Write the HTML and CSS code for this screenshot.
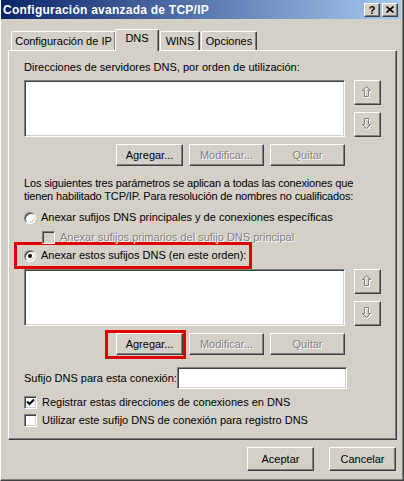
FILE: index.html
```html
<!DOCTYPE html>
<html lang="es">
<head>
  <meta charset="UTF-8">
  <title>Configuración avanzada de TCP/IP</title>
  <link rel="stylesheet" href="styles.css">
</head>
<body>
  <div class="window">
    <div class="titlebar">
      <span class="title">Configuración avanzada de TCP/IP</span>
      <div class="caption-btns">
        <span class="cap-btn">?</span>
        <span class="cap-btn">
          <svg width="8" height="7" viewBox="0 0 8 7"><path d="M0.5 0.5 L7.5 6.5 M7.5 0.5 L0.5 6.5" stroke="#000" stroke-width="1.6" fill="none"/></svg>
        </span>
      </div>
    </div>

    <div class="client">
      <div class="tabs">
        <span class="tab tab-ip">Configuración de IP</span>
        <span class="tab tab-dns active">DNS</span>
        <span class="tab tab-wins">WINS</span>
        <span class="tab tab-opc">Opciones</span>
      </div>

      <div class="panel">
        <div class="label first">Direcciones de servidores DNS, por orden de utilización:</div>
        <div class="list-row">
          <div class="listbox"></div>
          <div class="arrows">
            <span class="btn arrow-btn">
              <svg width="11" height="13" viewBox="0 0 11 13">
                <path d="M5.5 1.5 L9.5 5.5 L7.5 5.5 L7.5 11.5 L3.5 11.5 L3.5 5.5 L1.5 5.5 Z" stroke="#fff" fill="none"/>
                <path d="M4.5 0.5 L8.5 4.5 L6.5 4.5 L6.5 10.5 L2.5 10.5 L2.5 4.5 L0.5 4.5 Z" stroke="#808080" fill="none"/>
              </svg>
            </span>
            <span class="btn arrow-btn">
              <svg width="11" height="13" viewBox="0 0 11 13">
                <path d="M5.5 11.5 L9.5 7.5 L7.5 7.5 L7.5 1.5 L3.5 1.5 L3.5 7.5 L1.5 7.5 Z" stroke="#fff" fill="none"/>
                <path d="M4.5 10.5 L8.5 6.5 L6.5 6.5 L6.5 0.5 L2.5 0.5 L2.5 6.5 L0.5 6.5 Z" stroke="#808080" fill="none"/>
              </svg>
            </span>
          </div>
        </div>
        <div class="btn-row">
          <span class="btn push">Agregar...</span>
          <span class="btn push disabled">Modificar...</span>
          <span class="btn push disabled">Quitar</span>
        </div>

        <p class="note">Los siguientes tres parámetros se aplican a todas las conexiones que<br>tienen habilitado TCP/IP. Para resolución de nombres no cualificados:</p>

        <div class="option radio-1">
          <span class="radio"></span>
          <span>Anexar sufijos DNS principales y de conexiones específicas</span>
        </div>
        <div class="option sub-option disabled">
          <span class="check off"></span>
          <span>Anexar sufijos primarios del sufijo DNS principal</span>
        </div>
        <div class="option radio-2 marked">
          <span class="radio on"></span>
          <span>Anexar estos sufijos DNS (en este orden):</span>
        </div>

        <div class="list-row list-2">
          <div class="listbox"></div>
          <div class="arrows">
            <span class="btn arrow-btn">
              <svg width="11" height="13" viewBox="0 0 11 13">
                <path d="M5.5 1.5 L9.5 5.5 L7.5 5.5 L7.5 11.5 L3.5 11.5 L3.5 5.5 L1.5 5.5 Z" stroke="#fff" fill="none"/>
                <path d="M4.5 0.5 L8.5 4.5 L6.5 4.5 L6.5 10.5 L2.5 10.5 L2.5 4.5 L0.5 4.5 Z" stroke="#808080" fill="none"/>
              </svg>
            </span>
            <span class="btn arrow-btn">
              <svg width="11" height="13" viewBox="0 0 11 13">
                <path d="M5.5 11.5 L9.5 7.5 L7.5 7.5 L7.5 1.5 L3.5 1.5 L3.5 7.5 L1.5 7.5 Z" stroke="#fff" fill="none"/>
                <path d="M4.5 10.5 L8.5 6.5 L6.5 6.5 L6.5 0.5 L2.5 0.5 L2.5 6.5 L0.5 6.5 Z" stroke="#808080" fill="none"/>
              </svg>
            </span>
          </div>
        </div>
        <div class="btn-row">
          <span class="marker"><span class="btn push">Agregar...</span></span>
          <span class="btn push disabled">Modificar...</span>
          <span class="btn push disabled">Quitar</span>
        </div>

        <div class="suffix-row">
          <span class="suffix-label">Sufijo DNS para esta conexión:</span>
          <span class="field textbox"></span>
        </div>

        <div class="option cb-1">
          <span class="check">
            <svg width="9" height="9" viewBox="0 0 9 9"><path d="M1 3.5 L3.5 6 L8 1.5" stroke="#000" stroke-width="2" fill="none"/></svg>
          </span>
          <span>Registrar estas direcciones de conexiones en DNS</span>
        </div>
        <div class="option cb-2">
          <span class="check"></span>
          <span>Utilizar este sufijo DNS de conexión para registro DNS</span>
        </div>
      </div>

      <div class="dialog-btns">
        <span class="btn push wide">Aceptar</span>
        <span class="btn push wide">Cancelar</span>
      </div>
    </div>
  </div>
</body>
</html>
```

FILE: styles.css
```css
body {
  margin: 0;
  background: #d4d0c8;
  font-family: "Liberation Sans", Arial, sans-serif;
  font-size: 11px;
  color: #000;
}
.window {
  box-sizing: border-box;
  width: 404px;
  height: 481px;
  background: #d4d0c8;
  border-left: 1px solid #fff;
  border-right: 1px solid #404040;
  border-bottom: 1px solid #404040;
  box-shadow: inset -1px -1px #808080;
}
.titlebar {
  height: 19px;
  margin-right: 2px;
  display: flex;
  align-items: center;
  justify-content: space-between;
  padding: 0 3px 0 2px;
  background: linear-gradient(to right, #0a246a, #a6caf0);
}
.title {
  color: #fff;
  font-weight: bold;
  font-size: 12px;
  letter-spacing: 0.25px;
  padding-top: 1px;
}
.caption-btns {
  display: flex;
  gap: 2px;
}
.cap-btn {
  box-sizing: border-box;
  width: 16px;
  height: 14px;
  display: flex;
  align-items: center;
  justify-content: center;
  background: #d4d0c8;
  border: 1px solid;
  border-color: #fff #404040 #404040 #fff;
  box-shadow: inset -1px -1px #808080;
  font-weight: bold;
  font-size: 11px;
}
.client {
  padding: 0 6px 0 7px;
}
.tabs {
  display: flex;
  height: 31px;
  align-items: flex-end;
  padding-left: 3px;
}
.tab {
  box-sizing: border-box;
  height: 19px;
  padding-top: 3px;
  text-align: center;
  border: 1px solid #fff;
  border-right: 1px solid #404040;
  border-bottom: none;
  box-shadow: inset -1px 0 #808080;
  border-radius: 2px 2px 0 0;
  position: relative;
}
.tab-ip { width: 105px; }
.tab-dns { width: 44px; }
.tab-wins { width: 40px; margin-left: 1px; }
.tab-opc { width: 56px; margin-left: 1px; }
.tab.active {
  height: 22px;
  padding-top: 2px;
  margin-left: -1px;
  margin-bottom: -1px;
  background: #d4d0c8;
  z-index: 1;
}
.panel {
  box-sizing: border-box;
  height: 390px;
  padding: 10px 13px 0 15px;
  border: 1px solid;
  border-color: #fff #404040 #404040 #fff;
  box-shadow: inset -1px -1px #808080;
}
.label {
  line-height: 13px;
}
.list-row {
  display: flex;
  margin-top: 6px;
}
.listbox,
.field {
  box-sizing: border-box;
  background: #fff;
  border: 1px solid;
  border-color: #808080 #fff #fff #808080;
  box-shadow: inset 1px 1px #404040, inset -1px -1px #d4d0c8;
}
.listbox {
  width: 321px;
  height: 57px;
}
.arrows {
  display: flex;
  flex-direction: column;
  gap: 7px;
  margin-left: 9px;
}
.btn {
  box-sizing: border-box;
  display: inline-flex;
  align-items: center;
  justify-content: center;
  background: #d4d0c8;
  border: 1px solid;
  border-color: #fff #404040 #404040 #fff;
  box-shadow: inset -1px -1px #808080;
}
.arrow-btn {
  width: 27px;
  height: 25px;
}
.btn-row {
  display: flex;
  justify-content: flex-end;
  align-items: center;
  gap: 6px;
  margin-top: 7px;
  width: 321px;
  height: 22px;
}
.push {
  width: 75px;
  height: 22px;
}
.btn-row .push:first-child,
.marker .push {
  width: 67px;
}
.disabled,
.push.disabled {
  color: #808080;
  text-shadow: 1px 1px #fff;
}
.note {
  margin: 11px 0 0;
  line-height: 13px;
  white-space: nowrap;
  letter-spacing: -0.15px;
}
.option {
  display: flex;
  align-items: center;
  gap: 5px;
  height: 13px;
  line-height: 13px;
  white-space: nowrap;
}
.radio-1 { margin-top: 8px; }
.sub-option { margin-top: 7px; padding-left: 18px; }
.radio-2 { margin-top: -2px; }
.radio {
  box-sizing: border-box;
  width: 12px;
  height: 12px;
  border-radius: 50%;
  background: #fff;
  border: 1px solid;
  border-color: #808080 #fff #fff #808080;
  box-shadow: inset 1px 1px #404040, inset -1px -1px #d4d0c8;
  display: flex;
  align-items: center;
  justify-content: center;
}
.radio.on::after {
  content: "";
  width: 4px;
  height: 4px;
  border-radius: 50%;
  background: #000;
}
.check {
  box-sizing: border-box;
  width: 13px;
  height: 13px;
  background: #fff;
  border: 1px solid;
  border-color: #808080 #fff #fff #808080;
  box-shadow: inset 1px 1px #404040, inset -1px -1px #d4d0c8;
  display: flex;
  align-items: center;
  justify-content: center;
}
.check.off {
  background: #d4d0c8;
}
.marked {
  width: fit-content;
  height: 27px;
  border: 3px solid #e00000;
  box-sizing: border-box;
  margin-left: -10px;
  padding: 0 3px 0 7px;
}
.list-2 {
  margin-top: 0;
}
.marker {
  display: inline-flex;
  border: 3px solid #e00000;
  padding: 0 0 1px 8px;
  margin: -3px -3px -4px 0;
}
.suffix-row {
  display: flex;
  align-items: center;
  justify-content: space-between;
  width: 321px;
  margin-top: 12px;
}
.suffix-label {
  white-space: nowrap;
}
.textbox {
  flex-shrink: 0;
  width: 170px;
  height: 22px;
}
.cb-1 { margin-top: 7px; }
.cb-2 { margin-top: 5px; }
.dialog-btns {
  display: flex;
  justify-content: flex-end;
  gap: 15px;
  margin-top: 7px;
  padding-right: 1px;
}
.wide {
  width: 67px;
  height: 24px;
}
```
